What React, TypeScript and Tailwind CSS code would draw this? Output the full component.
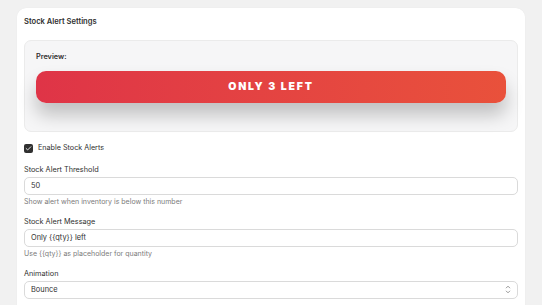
// App.tsx - Stock alert settings card

import { Check } from 'lucide-react';

function Field({
  label,
  value,
  help,
  select,
}: {
  label: string;
  value: string;
  help?: string;
  select?: boolean;
}) {
  return (
    <div className="flex flex-col">
      <label className="text-[7.3px] leading-[10px] text-[#303030]">{label}</label>
      <div className="mt-[2px] h-[18px] rounded-[5px] border border-[#dadada] bg-white px-[6px] flex items-center justify-between">
        <span className="text-[7.4px] text-[#303030]">{value}</span>
        {select && (
          <svg width="6" height="9" viewBox="0 0 6 9" fill="none" stroke="#8a8a8a" strokeWidth="0.9">
            <path d="M1 3.2 L3 1.2 L5 3.2" />
            <path d="M1 5.8 L3 7.8 L5 5.8" />
          </svg>
        )}
      </div>
      {help && <p className="mt-[2px] text-[7px] leading-[10px] text-[#7b7b7b]">{help}</p>}
    </div>
  );
}

export default function App() {
  return (
    <div
      className="h-[305px] overflow-hidden bg-[#f1f1f1] px-[17px] pt-[8px]"
      style={{ fontFamily: 'Inter, "Noto Sans", sans-serif' }}
    >
      <div className="rounded-[9px] bg-white px-[7px] pt-[9px] pb-4 shadow-[0_0_1px_rgba(0,0,0,0.08)]">
        <h2 className="text-[7.6px] leading-[10px] font-semibold text-[#303030]">Stock Alert Settings</h2>

        {/* Preview */}
        <div className="mt-[13px] rounded-[7px] border border-[#ebebeb] bg-[#f6f6f7] px-[11px] pt-[11px] pb-[28px]">
          <p className="text-[7.3px] leading-[10px] font-semibold text-[#303030]">Preview:</p>
          <div className="mt-[9px] h-[32px] rounded-[10px] bg-gradient-to-r from-[#df3447] to-[#e9513b] shadow-[0_12px_18px_rgba(0,0,0,0.22)] flex items-center justify-center">
            <span className="text-[10.5px] font-black tracking-[0.17em] text-white">ONLY 3 LEFT</span>
          </div>
        </div>

        {/* Checkbox */}
        <div className="mt-[11px] flex items-center gap-[5px]">
          <div className="w-[9px] h-[9px] rounded-[2px] bg-[#303030] flex items-center justify-center">
            <Check className="w-[7px] h-[7px] text-white" strokeWidth={3} />
          </div>
          <span className="text-[7.2px] text-[#303030]">Enable Stock Alerts</span>
        </div>

        <div className="mt-[11px] flex flex-col gap-[10px]">
          <Field label="Stock Alert Threshold" value="50" help="Show alert when inventory is below this number" />
          <Field label="Stock Alert Message" value="Only {{qty}} left" help="Use {{qty}} as placeholder for quantity" />
          <Field label="Animation" value="Bounce" select />
        </div>
      </div>
    </div>
  );
}
